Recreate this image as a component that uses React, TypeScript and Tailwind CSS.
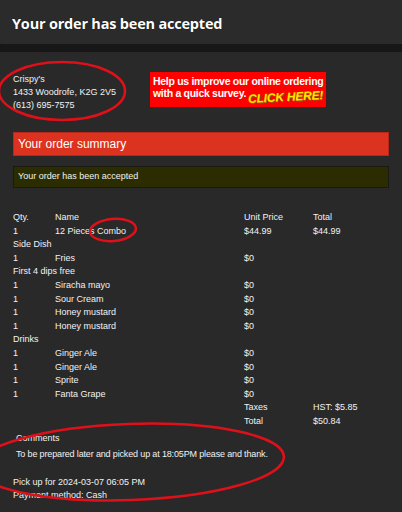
import React from "react";

const rows: { q?: string; n: string; u?: string; t?: string; section?: boolean }[] = [
  { q: "1", n: "12 Pieces Combo", u: "$44.99", t: "$44.99" },
  { n: "Side Dish", section: true },
  { q: "1", n: "Fries", u: "$0" },
  { n: "First 4 dips free", section: true },
  { q: "1", n: "Siracha mayo", u: "$0" },
  { q: "1", n: "Sour Cream", u: "$0" },
  { q: "1", n: "Honey mustard", u: "$0" },
  { q: "1", n: "Honey mustard", u: "$0" },
  { n: "Drinks", section: true },
  { q: "1", n: "Ginger Ale", u: "$0" },
  { q: "1", n: "Ginger Ale", u: "$0" },
  { q: "1", n: "Sprite", u: "$0" },
  { q: "1", n: "Fanta Grape", u: "$0" },
];

export default function App() {
  return (
    <div className="relative w-[402px] h-[512px] overflow-hidden bg-[#292929] text-[#f2f2f2] font-['Liberation_Sans',Arial,sans-serif]">
      <div className="h-[44px] bg-[#2b2b2b] rounded-bl-[4px] flex items-center px-3 pt-[3px]">
        <h1 className="text-[14.5px] font-bold text-white font-['Open_Sans',sans-serif] tracking-[-0.2px] [text-shadow:0_0_1px_#000]">
          Your order has been accepted
        </h1>
      </div>
      <div className="h-[8px] bg-[#171717]" />

      <div className="px-[13px] text-[9px]">
        <div className="flex pt-[19px]">
          <div className="w-[136px] leading-[13px] pt-[2px]">
            <div>Crispy's</div>
            <div>1433 Woodrofe, K2G 2V5</div>
            <div>(613) 695-7575</div>
          </div>
          <div className="w-[178px] h-[37px] bg-[#ff0000] border border-[#3a2020] px-[3px] pt-[3px]">
            <div className="text-[10.5px] leading-[12px] font-bold text-white tracking-[-0.3px] whitespace-nowrap">
              Help us improve our online ordering
            </div>
            <div className="flex items-start justify-between">
              <div className="text-[10.5px] leading-[12px] font-bold text-white tracking-[-0.3px] whitespace-nowrap">
                with a quick survey.
              </div>
              <div className="mt-[4px] text-[12px] leading-[12px] font-black italic text-[#ffe800] tracking-[-0.2px] -rotate-3 [text-shadow:1px_1px_0_#8a6000]">
                CLICK HERE!
              </div>
            </div>
          </div>
        </div>

        <div className="mt-[20px] h-[24px] bg-[#dc3220] border border-[#b8281a] flex items-center px-[4px] text-[12px] text-white">
          Your order summary
        </div>

        <div className="mt-[10px] h-[22px] bg-[#2b2d00] border border-[#1a1a10] flex items-center px-[4px] text-[9px]">
          Your order has been accepted
        </div>

        <div className="mt-[23px] leading-[13.6px]">
          <div className="grid grid-cols-[42px_189px_69px_1fr]">
            <div>Qty.</div>
            <div>Name</div>
            <div>Unit Price</div>
            <div>Total</div>
          </div>
          {rows.map((r, i) =>
            r.section ? (
              <div key={i}>{r.n}</div>
            ) : (
              <div key={i} className="grid grid-cols-[42px_189px_69px_1fr]">
                <div>{r.q}</div>
                <div>{r.n}</div>
                <div>{r.u}</div>
                <div>{r.t ?? ""}</div>
              </div>
            )
          )}
          <div className="grid grid-cols-[42px_189px_69px_1fr]">
            <div />
            <div />
            <div>Taxes</div>
            <div>HST: $5.85</div>
          </div>
          <div className="grid grid-cols-[42px_189px_69px_1fr]">
            <div />
            <div />
            <div>Total</div>
            <div>$50.84</div>
          </div>
        </div>

        <div className="mt-[3px] pl-[3px] leading-[13.6px]">
          <div>Comments</div>
          <div className="mt-[3px] tracking-[-0.15px]">To be prepared later and picked up at 18:05PM please and thank.</div>
        </div>
        <div className="mt-[14px] leading-[13.6px]">
          <div>Pick up for 2024-03-07 06:05 PM</div>
          <div>Payment method: Cash</div>
        </div>
      </div>

      <svg className="absolute inset-0 pointer-events-none" width="402" height="512" viewBox="0 0 402 512">
        <ellipse cx="62" cy="91" rx="63" ry="29" fill="none" stroke="#e0101a" strokeWidth="2.5" />
        <ellipse cx="113" cy="230" rx="23" ry="11" fill="none" stroke="#e0101a" strokeWidth="2.5" transform="rotate(-5 113 230)" />
        <ellipse cx="130" cy="462" rx="154" ry="38" fill="none" stroke="#e0101a" strokeWidth="2.5" transform="rotate(-2 130 462)" />
      </svg>
    </div>
  );
}
